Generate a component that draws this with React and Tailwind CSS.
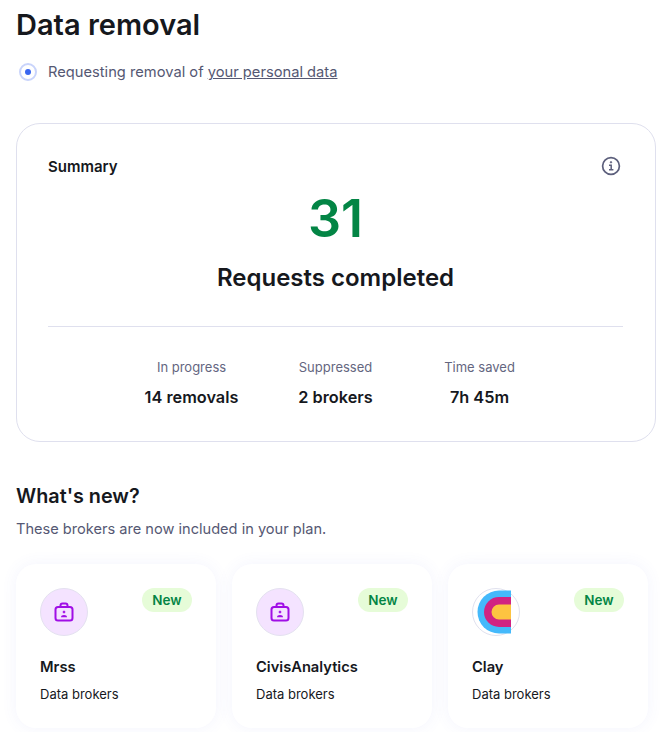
import React from "react";

const BrokerIcon = () => (
  <div className="w-12 h-12 rounded-full bg-[#f4e3ff] border border-[#e4e1f0] flex items-center justify-center">
    <svg width="24" height="24" viewBox="0 0 24 24" fill="none" stroke="#a00ee6" strokeWidth="2">
      <rect x="3.5" y="7" width="17" height="13.5" rx="2.5" />
      <path d="M8.5 7V5.5A2 2 0 0 1 10.5 3.5h3a2 2 0 0 1 2 2V7" />
      <circle cx="12" cy="12" r="1" fill="#a00ee6" strokeWidth="0.8" />
      <path d="M9 17.200c0-1.500 1.200-2.200 3-2.200s3 .7 3 2.200z" fill="#a00ee6" stroke="none" />
    </svg>
  </div>
);

const ClayLogo = () => (
  <div className="w-12 h-12 rounded-full bg-white border border-[#e0e1ee] flex items-center justify-center">
    <svg width="46" height="46" viewBox="0 0 46 46">
      <path d="M38 1.500H26a21.500 21.500 0 0 0 0 43h12z" fill="#44b9fb" />
      <path d="M38 8H26a15 15 0 0 0 0 30h12z" fill="#d12382" />
      <path d="M38 15.500H26a7.500 7.500 0 0 0 0 15h12z" fill="#fdc441" />
    </svg>
  </div>
);

const brokers = [
  { name: "Mrss", icon: <BrokerIcon /> },
  { name: "CivisAnalytics", icon: <BrokerIcon /> },
  { name: "Clay", icon: <ClayLogo /> },
];

const stats = [
  { label: "In progress", value: "14 removals" },
  { label: "Suppressed", value: "2 brokers" },
  { label: "Time saved", value: "7h 45m" },
];

export default function App() {
  return (
    <div className="w-[667px] h-[732px] overflow-hidden bg-white px-4 font-['Inter',sans-serif] text-[#16181d]">
      <h1 className="text-[29px] leading-[36px] font-semibold mt-[7px]">Data removal</h1>

      <div className="flex items-center mt-[17px] ml-[3px] h-6">
        <div className="w-[18px] h-[18px] rounded-full border-2 border-[#c9d4fb] bg-white flex items-center justify-center">
          <div className="w-[6px] h-[6px] rounded-full bg-[#3a66f0]" />
        </div>
        <p className="ml-[11px] text-[14.7px] text-[#555873]">
          Requesting removal of <span className="underline">your personal data</span>
        </p>
      </div>

      {/* Summary card */}
      <div className="mt-[39px] w-[640px] h-[319px] rounded-[24px] border border-[#dfe0ee] pl-[31px] pr-8 pt-[33px] bg-white">
        <div className="flex items-center justify-between h-5">
          <h2 className="text-[15px] font-semibold">Summary</h2>
          <svg width="20" height="20" viewBox="0 0 20 20" fill="none" stroke="#5c5f7c" strokeWidth="1.7" className="mr-[2px] -mt-[2px]">
            <circle cx="10" cy="10" r="8.400" />
            <path d="M8 9.200h2.200v4.500M8 13.800h4.400" strokeWidth="1.500" />
            <circle cx="10" cy="6.300" r="0.700" fill="#5c5f7c" strokeWidth="1" />
          </svg>
        </div>

        <div className="text-center text-[52px] leading-[64px] font-semibold text-[#038545] mt-[10px]">31</div>
        <div className="text-center text-[24px] leading-[32px] font-semibold mt-[11px]">Requests completed</div>

        <div className="border-t border-[#dfe0ee] mt-[32px]" />

        <div className="flex justify-center mt-[30px]">
          {stats.map((s) => (
            <div key={s.label} className="flex flex-col items-center w-[144px]">
              <span className="text-[13px] leading-5 text-[#64667f]">{s.label}</span>
              <span className="text-[16.300px] leading-6 font-semibold mt-[8px]">{s.value}</span>
            </div>
          ))}
        </div>
      </div>

      <h2 className="text-[19.800px] leading-7 font-semibold mt-[40px]">What's new?</h2>
      <p className="text-[14.600px] leading-5 text-[#555873] mt-[9px]">These brokers are now included in your plan.</p>

      {/* Broker cards */}
      <div className="flex gap-4 mt-[25px]">
        {brokers.map((b) => (
          <div
            key={b.name}
            className="w-[200px] h-[164px] rounded-[20px] bg-white shadow-[0_0_16px_rgba(90,100,220,0.07)] px-6 pt-6"
          >
            <div className="flex items-start justify-between">
              {b.icon}
              <span className="h-6 px-[10.500px] rounded-full bg-[#e6fcd8] text-[#038545] text-[13.500px] leading-6 font-semibold">
                New
              </span>
            </div>
            <div className="text-[14.700px] leading-5 font-semibold mt-[21px]">{b.name}</div>
            <div className="text-[13px] leading-5 mt-[7px]">Data brokers</div>
          </div>
        ))}
      </div>
    </div>
  );
}
